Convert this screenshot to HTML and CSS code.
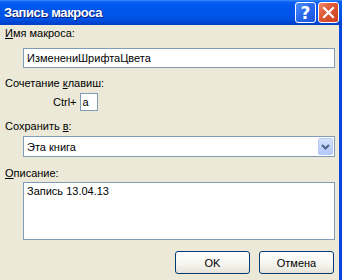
FILE: index.html
```html
<!DOCTYPE html>
<html lang="ru">
<head>
<meta charset="utf-8">
<title>Запись макроса</title>
<link rel="stylesheet" href="styles.css">
</head>
<body>
<div class="window">
  <div class="titlebar">
    <span class="title">Запись макроса</span>
    <div class="tbtns">
      <div class="tbtn help">?</div>
      <div class="tbtn close">
        <svg width="13" height="13" viewBox="0 0 13 13"><path d="M2 2 L11 11 M11 2 L2 11" stroke="#fff" stroke-width="2.2" stroke-linecap="square"/></svg>
      </div>
    </div>
  </div>
  <div class="content">
    <div class="label"><u>И</u>мя макроса:</div>
    <div class="field name">ИзменениШрифтаЦвета</div>
    <div class="label gap"><span>Сочетание <u>к</u>лавиш:</span></div>
    <div class="hotkey">
      <span class="ctrl">Ctrl+</span>
      <div class="field key">a</div>
    </div>
    <div class="label gap">Сохранить <u>в</u>:</div>
    <div class="field combo">
      <span>Эта книга</span>
      <div class="drop">
        <svg width="9" height="6" viewBox="0 0 9 6"><path d="M1 1 L4.5 4.5 L8 1" fill="none" stroke="#4D6185" stroke-width="2"/></svg>
      </div>
    </div>
    <div class="label gap2"><u>О</u>писание:</div>
    <div class="field desc">Запись 13.04.13</div>
    <div class="buttons">
      <div class="btn">OK</div>
      <div class="btn">Отмена</div>
    </div>
  </div>
</div>
</body>
</html>
```
FILE: styles.css
```css
html, body {
  margin: 0;
  padding: 0;
}
body {
  width: 342px;
  height: 280px;
  overflow: hidden;
  background: #ECE9D8;
  font-family: "Liberation Sans", Arial, sans-serif;
  font-size: 11px;
  color: #000;
}
.window {
  display: flex;
  flex-direction: column;
  height: 280px;
}
.titlebar {
  height: 25px;
  display: flex;
  align-items: center;
  justify-content: space-between;
  background: linear-gradient(to bottom, #3A8CFF 0px, #0A5EF2 2px, #0058EE 5px, #0055EA 12px, #0053E4 19px, #0046D4 22px, #003DC6 25px);
  padding: 0 3px 0 4px;
}
.title {
  color: #fff;
  font-weight: bold;
  font-size: 13px;
  text-shadow: 1px 1px 0 #0A1E7A;
  letter-spacing: -0.4px;
}
.tbtns {
  display: flex;
  gap: 2px;
}
.tbtn {
  width: 19px;
  height: 19px;
  border: 1px solid #fff;
  border-radius: 3px;
  display: flex;
  align-items: center;
  justify-content: center;
}
.help {
  background: linear-gradient(135deg, #4C8DFA 0%, #2867EC 50%, #1B55DC 100%);
  color: #fff;
  font-weight: bold;
  font-size: 17px;
  font-family: "DejaVu Sans", sans-serif;
}
.close {
  background: linear-gradient(135deg, #F08A6A 0%, #E05A38 40%, #C9401E 100%);
}
.content {
  flex: 1;
  border-right: 3px solid #0747DE;
  padding: 2px 5px 0 5px;
  display: flex;
  flex-direction: column;
}
.label {
  line-height: 13px;
  height: 13px;
}
.label.gap { margin-top: 9px; }
.label.gap2 { margin-top: 10px; }
.field {
  background: #fff;
  border: 1px solid #7F9DB9;
  box-sizing: border-box;
  margin-left: 18px;
  padding-left: 3px;
  display: flex;
  align-items: center;
}
.name {
  height: 20px;
  margin-top: 8px;
  width: 312px;
}
.hotkey {
  display: flex;
  align-items: center;
  margin-top: 3px;
  margin-left: 48px;
}
.ctrl { margin-right: 3px; }
.field.key {
  margin-left: 0;
  width: 18px;
  height: 18px;
  padding-left: 2px;
}
.combo {
  margin-top: 3px;
  height: 21px;
  width: 312px;
  justify-content: space-between;
  padding-right: 1px;
}
.drop {
  width: 15px;
  height: 17px;
  border: 1px solid #B9CAF3;
  border-radius: 2px;
  box-sizing: border-box;
  background: linear-gradient(to bottom, #D6E2FD 0%, #C2D3FC 50%, #B4C8FA 100%);
  display: flex;
  align-items: center;
  justify-content: center;
}
.desc {
  margin-top: 2px;
  height: 58px;
  width: 312px;
  align-items: flex-start;
  padding-top: 2px;
}
.buttons {
  display: flex;
  justify-content: flex-end;
  gap: 9px;
  margin-top: 11px;
}
.btn {
  width: 75px;
  height: 23px;
  box-sizing: border-box;
  border: 1px solid #003C74;
  border-radius: 3px;
  background: linear-gradient(to bottom, #FFFFFF 0%, #F5F4EE 60%, #E4E2D8 100%);
  display: flex;
  align-items: center;
  justify-content: center;
}
```
